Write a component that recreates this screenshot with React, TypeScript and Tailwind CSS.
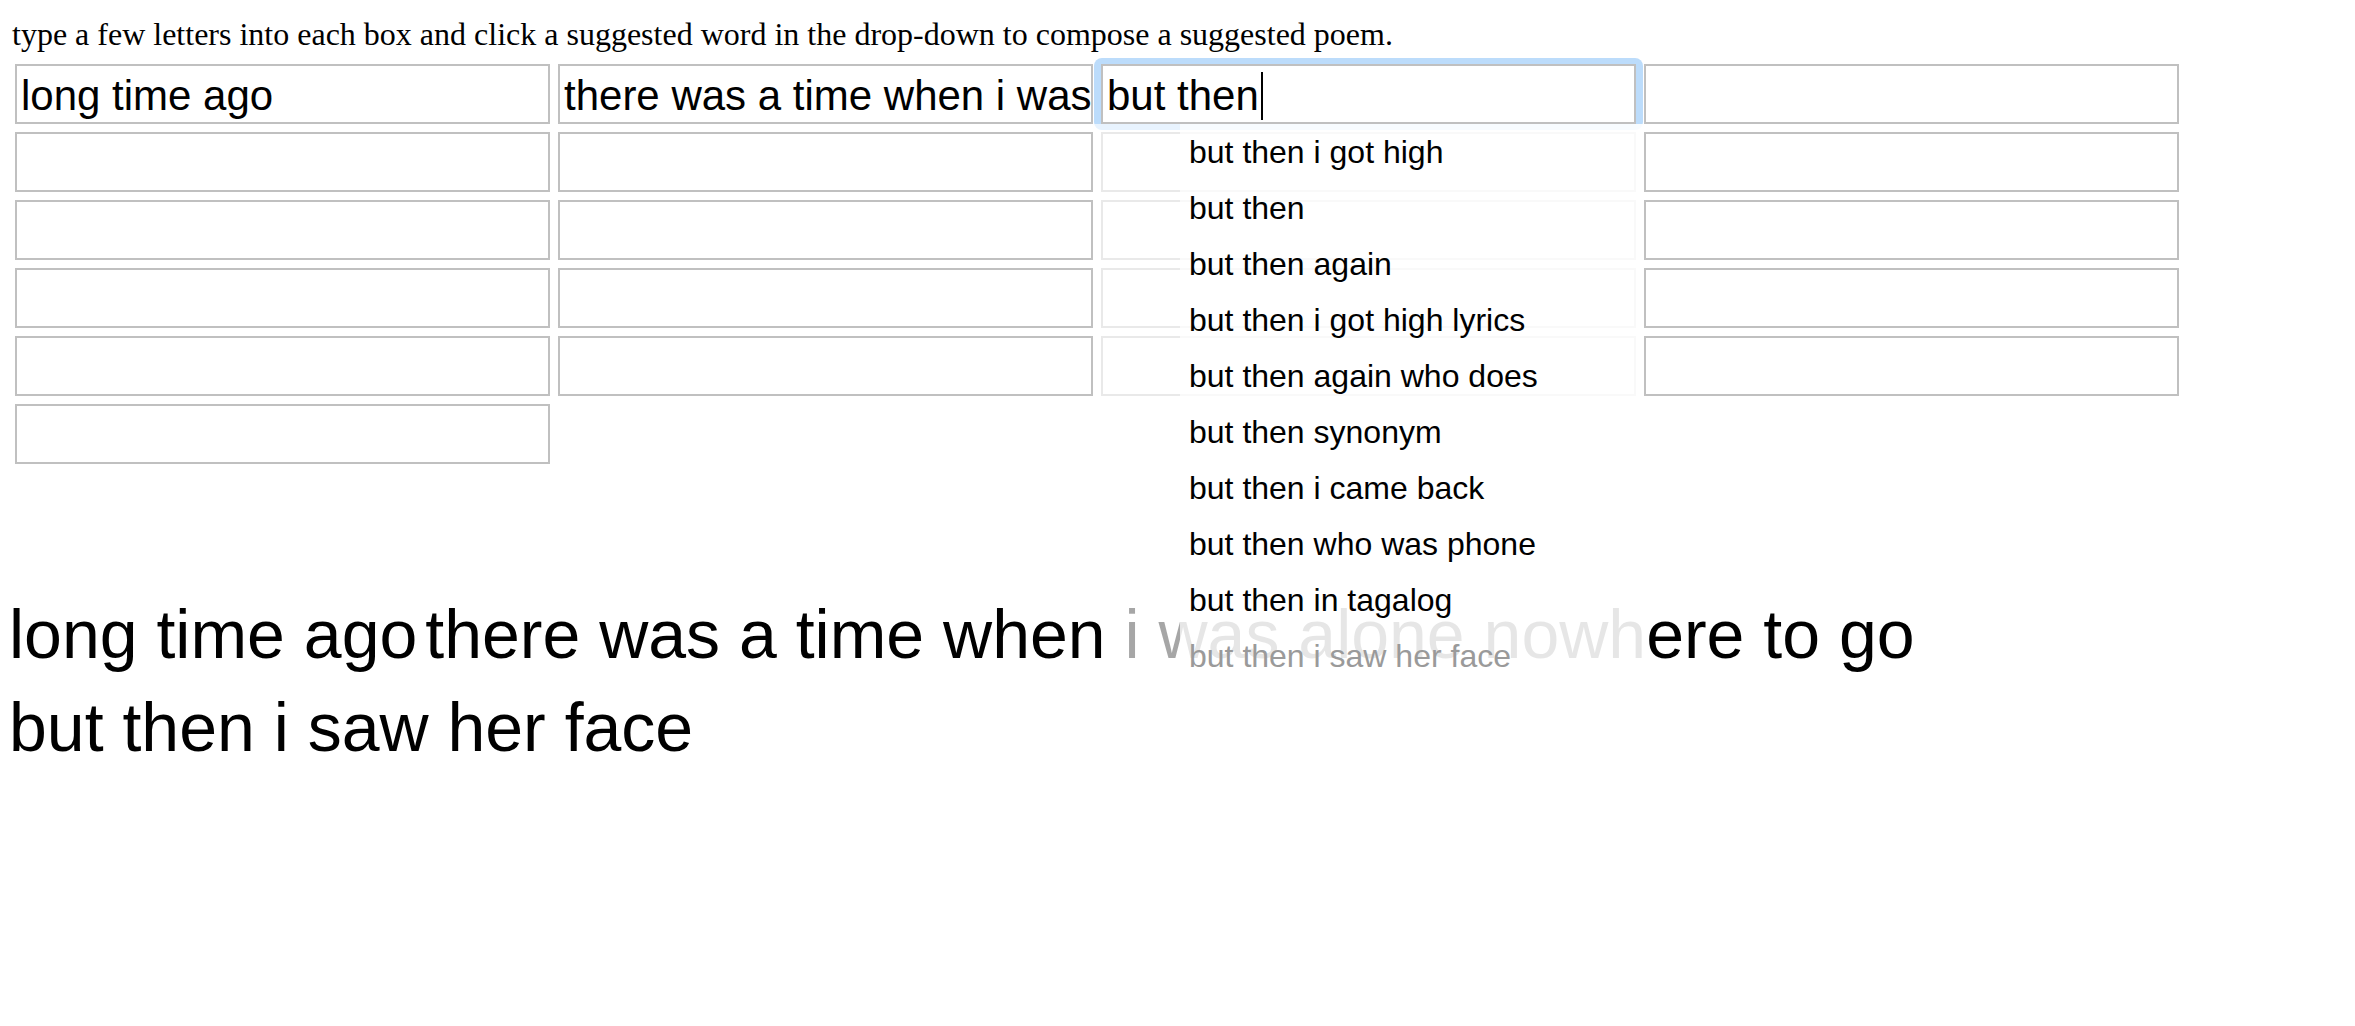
import React from "react";

const rows: string[][] = [
  ["long time ago", "there was a time when i was alone nowhere to go", "__FOCUS__", ""],
  ["", "", "", ""],
  ["", "", "", ""],
  ["", "", "", ""],
  ["", "", "", ""],
  [""],
];

const suggestions = [
  "but then i got high",
  "but then",
  "but then again",
  "but then i got high lyrics",
  "but then again who does",
  "but then synonym",
  "but then i came back",
  "but then who was phone",
  "but then in tagalog",
];

const poem = ["long time ago", "there was a time when i was alone nowhere to go", "but then i saw her face"];

function Box({ value }: { value: string }) {
  return (
    <input
      readOnly
      value={value}
      className="box-border block w-[535px] h-[60px] border-2 border-solid border-[#c0c0c0] bg-white pl-[4px] pr-0 pt-[3px] pb-0 text-[42px] leading-[48px] text-black outline-none font-['Liberation_Sans',Arial,sans-serif]"
    />
  );
}

function FocusBox() {
  return (
    <div className="relative w-[535px] h-[60px]">
      <div className="absolute -left-[7px] -top-[6px] w-[549px] h-[72px] rounded-[8px] bg-[#bcdcfb]" />
      <div className="absolute inset-0 box-border border-2 border-solid border-[#c0c0c0] bg-white pl-[4px] pt-[3px] flex items-center text-[42px] leading-[48px] text-black font-['Liberation_Sans',Arial,sans-serif] whitespace-pre">
        <span>but then</span>
        <span className="inline-block w-[2px] h-[48px] bg-black ml-[2px]" />
      </div>
      <div className="absolute -left-[7px] top-[60px] w-[7px] h-[12px] z-20 bg-white/65" />
      <div className="absolute left-0 top-[60px] w-[542px] h-[564px] z-20 flex font-['Liberation_Sans',Arial,sans-serif]">
        <div className="w-[79px] h-full bg-white/65" />
        <div className="flex-1 h-full bg-white/90 pl-[9px]">
          {suggestions.map((s) => (
            <div key={s} className="h-[56px] leading-[56px] text-[32px] text-black whitespace-nowrap">
              {s}
            </div>
          ))}
          <div className="h-[56px] leading-[56px] text-[32px] text-[#9a9a9a] whitespace-nowrap">
            but then i saw her face
          </div>
        </div>
      </div>
    </div>
  );
}

export default function App() {
  return (
    <div className="relative w-full min-h-[1026px] bg-white overflow-hidden">
      <p className="pl-[12px] pt-[16px] text-[32px] leading-[37px] text-black font-['Liberation_Serif','Times_New_Roman',serif]">
        type a few letters into each box and click a suggested word in the drop-down to compose a suggested poem.
      </p>
      <div className="mt-[11px] pl-[15px] grid grid-cols-[repeat(4,535px)] gap-x-[8px] gap-y-[8px]">
        {rows.flatMap((r, i) =>
          r.map((v, j) =>
            v === "__FOCUS__" ? <FocusBox key={`${i}-${j}`} /> : <Box key={`${i}-${j}`} value={v} />
          )
        )}
      </div>
      <div className="mt-[131px] pl-[9px] flex flex-wrap gap-x-[8px] gap-y-[15px] text-[68px] leading-[78px] text-black font-['Liberation_Sans',Arial,sans-serif]">
        {poem.map((p) => (
          <span key={p} className="whitespace-nowrap">
            {p}
          </span>
        ))}
      </div>
    </div>
  );
}
